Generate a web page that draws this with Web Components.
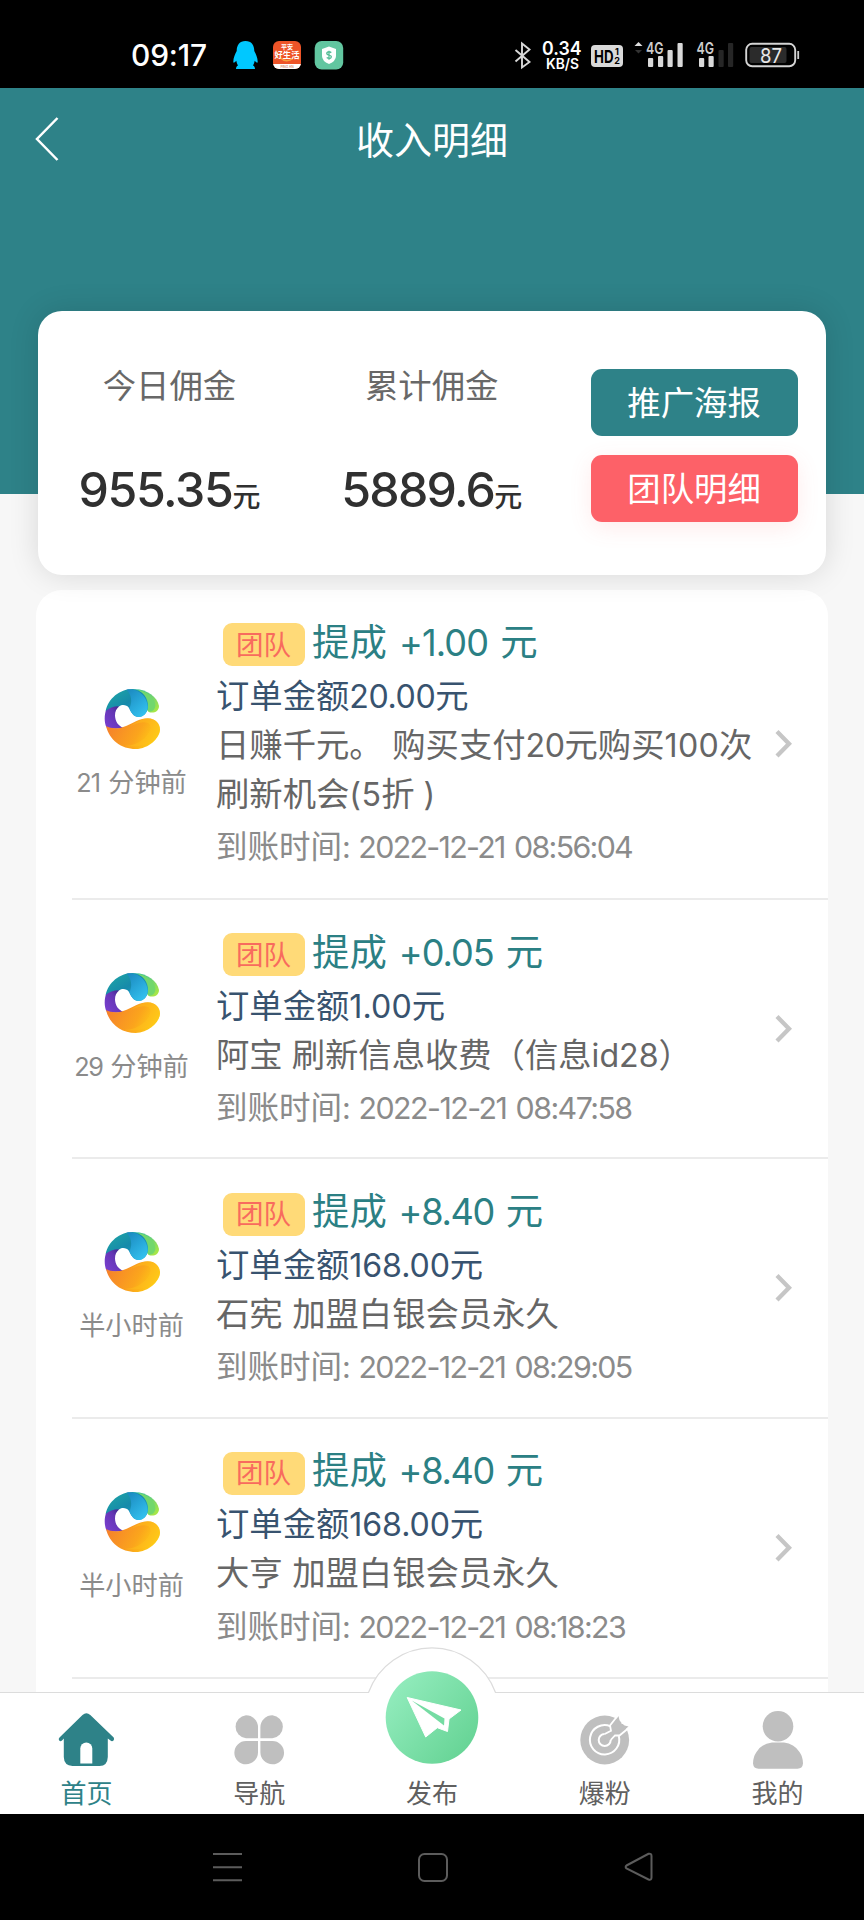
<!DOCTYPE html>
<html lang="zh-CN">
<head>
<meta charset="utf-8">
<title>收入明细</title>
<style>
html,body{margin:0;padding:0;background:#000}
body{font-family:Inter,"Noto Sans CJK SC",sans-serif;width:864px;height:1920px;overflow:hidden}
</style>
</head>
<body>
<income-app></income-app>
<script>
const define=(name,html,init)=>{
  const t=document.createElement('template');t.innerHTML=html;
  customElements.define(name,class extends HTMLElement{
    constructor(){super();this.attachShadow({mode:'open'}).append(t.content.cloneNode(true));}
    connectedCallback(){if(init)init.call(this,this.shadowRoot);}
  });
};

/* Numeral run set to a given advance width through its tracking */
define('num-run',`<style>:host{display:inline;white-space:pre}span{white-space:pre;font-size:.965em;word-spacing:.08em}</style><span><slot></slot></span>`,function(r){
  const s=r.querySelector('span'),w=+this.getAttribute('w'),n=this.textContent.length;
  const nat=s.getBoundingClientRect().width;
  if(w&&nat)s.style.letterSpacing=((w-nat)/n)+'px';
});

define('status-bar',`<style>
:host{display:flex;box-sizing:border-box;height:88px;background:#000;color:#fff;align-items:center;padding:22px 0 0 131px}
.t{font-size:31px;font-weight:500;line-height:36px;width:102px}
svg{display:block;flex:none}
.q{margin-right:14px}.p{margin-right:12px}
.r{margin-left:auto}
text{font-family:Inter,"Noto Sans CJK SC",sans-serif}
</style>
<div class="t"><num-run w="76">09:17</num-run></div>
<svg class="q" width="25" height="30" viewBox="0 0 25 30"><path fill="#00c8ff" d="M12.500 1C6.500 1 3.800 5 3.700 11C2.200 14 .2 18 .3 22C.5 23.500 2 22.300 3.300 20.800C3.700 22.800 4.300 24.500 5 25.500C3.500 26 3 27.500 3 29H22C22 27.500 21.500 26 20 25.500C20.700 24.500 21.300 22.800 21.700 20.800C23 22.300 24.500 23.500 24.700 22C24.800 18 22.800 14 21.300 11C21.200 5 18.500 1 12.500 1Z"/></svg>
<svg class="p" width="30" height="30" viewBox="0 0 30 30"><defs><clipPath id="c"><rect x="1" y="1" width="28" height="28" rx="6"/></clipPath></defs><g clip-path="url(#c)"><rect width="30" height="30" fill="#ee5428"/><rect y="24" width="30" height="6" fill="#fff"/><path d="M8 17.500Q14 23.500 21 18.500" stroke="#f8a03c" stroke-width="1.500" fill="none"/><text x="15" y="8.700" font-size="6" fill="#fff" font-weight="700" text-anchor="middle">平安</text><text x="15" y="17.700" font-size="8.300" fill="#fff" font-weight="700" text-anchor="middle">好生活</text><text x="15" y="27.800" font-size="3.200" fill="#c65b35" text-anchor="middle">PING AN</text></g></svg>
<svg width="30" height="30" viewBox="0 0 30 30"><rect x=".7" y="1" width="28.500" height="28.500" rx="7" fill="#62c6a0"/><path fill="#fff" d="M15 6.500L22 9V16Q22 21 15 24Q8 21 8 16V9Z"/><path d="M17.300 12.600Q15 11 13 12.500Q12 14.200 15 15Q18.200 16 17 17.700Q15 19.200 12.700 17.500M15 10.700V19.700" fill="none" stroke="#55bd96" stroke-width="1.300"/></svg>
<svg class="r" width="352" height="36" viewBox="512 37 352 36">
<path d="M515.500 50L529.500 62L522 67.500V43.500L529.500 49.500L515.500 61.500" fill="none" stroke="#d8d8d8" stroke-width="1.900"/>
<text x="542" y="55" font-size="19" font-weight="600" fill="#fff" textLength="39.500" lengthAdjust="spacingAndGlyphs">0.34</text>
<text x="546" y="69" font-size="14.500" font-weight="600" fill="#fff" textLength="33" lengthAdjust="spacingAndGlyphs">KB/S</text>
<rect x="591" y="45" width="32" height="22" rx="4" fill="#d9d9d9"/>
<text x="594" y="62.500" font-size="18" font-weight="700" fill="#000" textLength="19.500" lengthAdjust="spacingAndGlyphs">HD</text>
<text x="615" y="54.700" font-size="9" font-weight="700" fill="#000">1</text><text x="614.300" y="64" font-size="9" font-weight="700" fill="#000">2</text>
<path d="M634.500 46L638.500 42L642.500 46Z" fill="#ddd"/><path d="M635 50H642L638.500 53.500Z" fill="#333"/>
<text x="646" y="54" font-size="16.500" font-weight="600" fill="#ccc" textLength="17.500" lengthAdjust="spacingAndGlyphs">4G</text>
<g fill="#d9d9d9"><rect x="648" y="58" width="5.200" height="9" rx="1"/><rect x="658" y="56" width="5.200" height="11" rx="1"/><rect x="667.500" y="50" width="5.200" height="17" rx="1"/><rect x="677.500" y="43" width="5.200" height="24" rx="1"/><rect x="699" y="58" width="5.200" height="9" rx="1"/><rect x="708.500" y="56" width="5.200" height="11" rx="1"/></g>
<g fill="#262626"><rect x="718.500" y="50" width="5.200" height="17" rx="1"/><rect x="728" y="43" width="5.200" height="24" rx="1"/></g>
<text x="696.500" y="54" font-size="16.500" font-weight="600" fill="#ccc" textLength="17.500" lengthAdjust="spacingAndGlyphs">4G</text>
<rect x="746.200" y="43.800" width="49" height="22.500" rx="6" fill="none" stroke="#d4d4d4" stroke-width="1.900"/><rect x="749.500" y="47" width="37" height="16" rx="2" fill="#2b2b2b"/><rect x="797.300" y="51" width="1.800" height="8" fill="#ccc"/>
<text x="760" y="62.700" font-size="20.500" fill="#e8e8e8" textLength="22" lengthAdjust="spacingAndGlyphs">87</text>
</svg>`);

define('page-header',`<style>
:host{display:block;box-sizing:border-box;height:405.500px;background:#2e8288;color:#fff}
.bar{display:grid;grid-template-columns:120px 1fr 120px;align-items:center;height:102px}
h1{margin:0;font-weight:400;font-size:38px;line-height:48px;text-align:center;padding-top:2px}
svg{display:block;margin-left:34px}
</style><div class="bar"><svg width="28" height="46" viewBox="0 0 28 46"><path d="M23.500 2L3 23L23.500 44" fill="none" stroke="#fff" stroke-width="2.500"/></svg><h1><slot></slot></h1></div>`);

define('sum-stat',`<style>
:host{display:flex;flex-direction:column;align-items:center;width:262.300px;padding-top:51px}
.l{font-size:33.400px;line-height:48px;color:#686868}
.v{font-size:50px;font-weight:500;line-height:60px;color:#303030;margin-top:49px;white-space:nowrap;height:60px}
.v small{font-size:28px}
</style><div class="l"><slot name="label"></slot></div><div class="v"><slot></slot><small>元</small></div>`);

define('pill-button',`<style>
:host{display:flex;align-items:center;justify-content:center;width:207px;height:67px;border-radius:11px;background:var(--bg,#2e8288);color:#fff;font-size:33.400px;line-height:48px;box-shadow:var(--sh,none)}
</style><slot></slot>`);

define('summary-card',`<style>
:host{display:flex;position:relative;margin:-182.500px 38.300px 0;height:264px;border-radius:24px;background:#fff;box-shadow:0 0 30px rgba(0,0,0,.13)}
.b{display:flex;flex-direction:column;gap:19px;padding-top:58px;width:262.300px;align-items:center}
</style>
<sum-stat><span slot="label">今日佣金</span><num-run w="154">955.35</num-run></sum-stat>
<sum-stat><span slot="label">累计佣金</span><num-run w="153">5889.6</num-run></sum-stat>
<div class="b"><pill-button>推广海报</pill-button><pill-button style="--bg:#fd6168;--sh:0 6px 22px rgba(253,97,104,.13)">团队明细</pill-button></div>`);

define('brand-logo',`<style>:host{display:block}svg{display:block}</style>
<svg width="57" height="62" viewBox="42 34 171 186">
<defs>
<linearGradient id="a" x1="0" y1="0" x2="1" y2="1"><stop offset="0" stop-color="#20aaa5"/><stop offset=".5" stop-color="#168aaa"/><stop offset="1" stop-color="#24a9db"/></linearGradient>
<linearGradient id="b" x1="0" y1="0" x2=".7" y2="1"><stop offset="0" stop-color="#1a86bd"/><stop offset="1" stop-color="#32c0ee"/></linearGradient>
<linearGradient id="g" x1="0" y1="0" x2="1" y2="1"><stop offset="0" stop-color="#25b7ab"/><stop offset="1" stop-color="#b5ec3c"/></linearGradient>
<linearGradient id="o" x1="0" y1=".3" x2="1" y2=".6"><stop offset="0" stop-color="#f5802c"/><stop offset=".6" stop-color="#fba51c"/><stop offset="1" stop-color="#ffd413"/></linearGradient>
<linearGradient id="v" x1="0" y1="1" x2="1" y2="0"><stop offset="0" stop-color="#7b3fd2"/><stop offset=".6" stop-color="#6336b4"/><stop offset="1" stop-color="#2e2379"/></linearGradient>
</defs>
<path fill="url(#g)" d="M128 38C165 34 202 58 207 88C207 105 190 111 176 106Z"/>
<path fill="#71d76d" d="M145 39C175 45 197 68 196 87C194 101 185 106 174 104Z"/>
<path fill="url(#v)" d="M49 98C42 116 43 137 49 152C63 157 82 158 100 153C84 147 76 134 75 117C75 105 79 96 88 89C74 84 60 89 49 98Z"/>
<path fill="url(#a)" d="M47 103C55 65 89 38 127 37C158 40 176 65 174 91C172 110 161 120 146 121C128 120 122 104 117 94C110 84 96 83 88 89C74 88 58 93 47 103Z"/>
<path fill="url(#b)" d="M109 39C145 32 172 60 173 91C171 110 161 120 146 121C129 120 123 106 118 95C127 78 126 53 109 39Z"/>
<path fill="url(#o)" d="M48 148C66 158 90 156 110 147C132 138 150 125 173 125C196 125 210 141 210 159C209 184 177 216 137 217C94 217 58 190 48 148Z"/>
<path fill="#ffc21c" opacity=".45" d="M113 153C135 141 157 132 174 139C188 148 180 171 159 188C142 202 121 209 103 207C150 218 210 194 210 157C209 140 195 126 175 125C149 126 134 142 113 153Z"/>
</svg>`);

define('income-item',`<style>
:host{display:grid;grid-template-columns:119px 1fr 76px;align-items:center;margin-left:36px;box-sizing:border-box;height:var(--h,259.300px);border-bottom:2px solid #ebebeb}
.av{display:flex;flex-direction:column;align-items:center;color:#8b8b8b;font-size:26.200px;line-height:38px;white-space:nowrap;padding-top:1px}
.av brand-logo{margin-bottom:14px;margin-left:1px}
.tx{align-self:start;padding:24px 0 0 25px;white-space:nowrap;color:#666;font-size:33.330px;line-height:49.300px}
.ti{display:flex;align-items:center;height:57.500px;color:#2b8084;font-size:37.400px;line-height:52px}
.bd{display:flex;align-items:center;justify-content:center;box-sizing:border-box;width:82px;height:43px;border-radius:9px;background:#ffda78;color:#f86b5e;font-size:27.500px;line-height:40px;margin:4px 7.500px 0 6.500px}
.or{color:#38536f}
.tm{font-size:31.500px;line-height:44px;color:#8b8b8b;margin-top:6px}
svg{display:block;margin-left:22px}
</style>
<div class="av"><brand-logo></brand-logo><div><slot name="ago"></slot></div></div>
<div class="tx"><div class="ti"><span class="bd">团队</span><span>提成<slot name="gain"></slot>元</span></div>
<div class="or">订单金额<slot name="order"></slot>元</div><div><slot></slot></div><div class="tm">到账时间<slot name="time"></slot></div></div>
<svg width="20" height="32" viewBox="0 0 20 32"><path d="M3 3.500L15 15.700L3 28" fill="none" stroke="#c6c6c6" stroke-width="4.300"/></svg>`);

define('income-list',`<style>:host{display:block;margin:15px 36px 0;background:#fff;border-radius:26px 26px 0 0;height:1102px;overflow:hidden;flex:none}</style><slot></slot>`);

define('tab-item',`<style>
:host{display:flex;flex-direction:column;align-items:center;flex:1 1 0;color:var(--c,#606060);font-size:26px;line-height:38px}
.i{height:82px;display:flex;align-items:flex-end;margin-bottom:1px}
</style><div class="i"><slot name="icon"></slot></div><span><slot></slot></span>`);

define('tab-bar',`<style>
:host{display:flex;position:relative;height:122px;background:#fff;color:#000}
.bump{position:absolute;left:0;top:-48px}
tab-item{position:relative}
svg{display:block}
</style>
<svg class="bump" width="864" height="170" viewBox="0 1644 864 170"><path d="M0 1692.500H368.500A67.500 67.500 0 0 1 495.500 1692.500H864V1814H0Z" fill="#fff"/><path d="M0 1692.500H368.500A67.500 67.500 0 0 1 495.500 1692.500H864" fill="none" stroke="#dcdcdc" stroke-width="1.200"/></svg>
<tab-item style="--c:#2e8288"><svg slot="icon" width="58" height="82" viewBox="57 1692 58 82"><path fill="#2e8288" d="M82.500 1715Q86.400 1711.500 90.300 1715L113.700 1737.500Q114.700 1739 113.500 1740.500Q112 1742 110.500 1740.500L107.800 1738.500V1757Q107.500 1766 99.500 1766H72.500Q64 1765.500 63.800 1757V1738.500L62 1740.500Q60.500 1742 59.200 1740.500Q58 1739 59.500 1737.500Z"/><path fill="#fff" d="M80.300 1763.500V1748.500A6 6 0 0 1 92.300 1748.500V1763.500Z"/></svg>首页</tab-item>
<tab-item><svg slot="icon" width="52" height="82" viewBox="233 1692 52 82"><g fill="#bfbfbf"><path d="M246 1715.300A12 12 0 0 1 258 1727V1738.200H246A11.500 11.500 0 0 1 246 1715.300Z"/><path d="M272.400 1715.300A12 12 0 0 0 260.400 1727V1738.200H272.400A11.500 11.500 0 0 0 272.400 1715.300Z"/><path d="M246 1764.300A12 12 0 0 0 258 1752.500V1741H246A11.500 11.500 0 0 0 246 1764.300Z"/><path d="M272.400 1764.300A12 12 0 0 1 260.400 1752.500V1741H272.400A11.500 11.500 0 0 1 272.400 1764.300Z"/></g></svg>导航</tab-item>
<tab-item><svg slot="icon" width="94" height="104" viewBox="385 1670 94 104"><defs><linearGradient id="gg" x1="0" y1="0" x2="1" y2=".8"><stop offset="0" stop-color="#98efc2"/><stop offset="1" stop-color="#65d394"/></linearGradient></defs><circle cx="432" cy="1717.500" r="46.300" fill="url(#gg)"/><path fill="#fff" stroke="#fff" stroke-width="1" stroke-linejoin="round" d="M407.200 1697.500L461 1710L449 1719L447.500 1731.500L437.300 1727.700L425.700 1737Z"/><path fill="#75dca3" d="M411.700 1700.500L444.500 1718.500L444 1725.500Z"/></svg>发布</tab-item>
<tab-item><svg slot="icon" width="54" height="82" viewBox="578 1692 54 82"><circle cx="604.700" cy="1740" r="24.400" fill="#bfbfbf"/><path d="M619.500 1711L621.500 1723.800L633 1725.800V1711Z" fill="#fff"/><path d="M610.500 1726.300A14.700 14.700 0 1 0 618.800 1736M604.700 1734A6 6 0 1 0 610.700 1740" fill="none" stroke="#fff" stroke-width="2"/><path fill="#bfbfbf" d="M618.500 1716L620.500 1724.500L628.500 1726.500L619.500 1734.500H613.500L606.500 1741L604 1738.500L611 1731.500V1725.500Z"/><path d="M619 1714L610 1725.500L611 1730.700L604.700 1734M610.700 1740L615 1735.500L619.500 1735.500L630.500 1726.500" fill="none" stroke="#fff" stroke-width="1.800"/></svg>爆粉</tab-item>
<tab-item><svg slot="icon" width="54" height="82" viewBox="751 1692 54 82"><g fill="#bfbfbf"><circle cx="778" cy="1726.300" r="15.300"/><path d="M772 1742.500H784Q794 1743.500 799.500 1752Q803 1757 803 1763.500Q802.500 1768.700 797.500 1768.700H758.500Q753.500 1768.700 753 1763.500Q753 1757 756.500 1752Q762 1743.500 772 1742.500Z"/></g></svg>我的</tab-item>`);

define('system-nav',`<style>:host{display:flex;height:106px;background:#000;align-items:center;box-sizing:border-box;padding:0 0 0 211px}svg{display:block}.s{margin-left:173px}.t{margin-left:174px}
g,svg{fill:none;stroke:#5c5c5c;stroke-width:2}</style>
<svg width="32" height="32" viewBox="0 0 32 32"><path d="M2 3H31M2 16.300H31M2 29.300H31"/></svg>
<svg class="s" width="34" height="32" viewBox="0 0 34 32"><rect x="3" y="3" width="28" height="27" rx="5.500"/></svg>
<svg class="t" width="32" height="32" viewBox="0 0 32 32"><path d="M2.500 14.500L24.500 2.800Q27.500 2.200 27.500 5V26.500Q27.500 29.500 24.500 28.500L2.500 17.500Q.8 16 2.500 14.500Z"/></svg>`);

define('income-app',`<style>:host{display:flex;flex-direction:column;width:864px;height:1920px;background:#f7f7f7}
status-bar,page-header,summary-card,tab-bar,system-nav{flex:none}</style>
<status-bar></status-bar>
<page-header>收入明细</page-header>
<summary-card></summary-card>
<income-list>
<income-item style="--h:310px"><span slot="ago"><num-run w="32">21 </num-run>分钟前</span><num-run slot="gain" w="113.500"> +1.00 </num-run><num-run slot="order" w="86">20.00</num-run>日赚千元。<num-run w="9.600"> </num-run>购买支付<num-run w="39">20</num-run>元购买<num-run w="54.500">100</num-run>次<br>刷新机会<num-run w="32">(5</num-run>折<num-run w="18"> )</num-run><num-run slot="time" w="290">: 2022-12-21 08:56:04</num-run></income-item>
<income-item><span slot="ago"><num-run w="36">29 </num-run>分钟前</span><num-run slot="gain" w="119"> +0.05 </num-run><num-run slot="order" w="62.500">1.00</num-run>阿宝<num-run w="9"> </num-run>刷新信息收费（信息<num-run w="67">id28</num-run>）<num-run slot="time" w="289.500">: 2022-12-21 08:47:58</num-run></income-item>
<income-item><span slot="ago">半小时前</span><num-run slot="gain" w="119"> +8.40 </num-run><num-run slot="order" w="100.500">168.00</num-run>石宪<num-run w="9.500"> </num-run>加盟白银会员永久<num-run slot="time" w="289.500">: 2022-12-21 08:29:05</num-run></income-item>
<income-item style="--h:260px"><span slot="ago">半小时前</span><num-run slot="gain" w="119"> +8.40 </num-run><num-run slot="order" w="100.500">168.00</num-run>大亨<num-run w="9.500"> </num-run>加盟白银会员永久<num-run slot="time" w="283">: 2022-12-21 08:18:23</num-run></income-item>
</income-list>
<tab-bar></tab-bar>
<system-nav></system-nav>`);
</script>
</body>
</html>
